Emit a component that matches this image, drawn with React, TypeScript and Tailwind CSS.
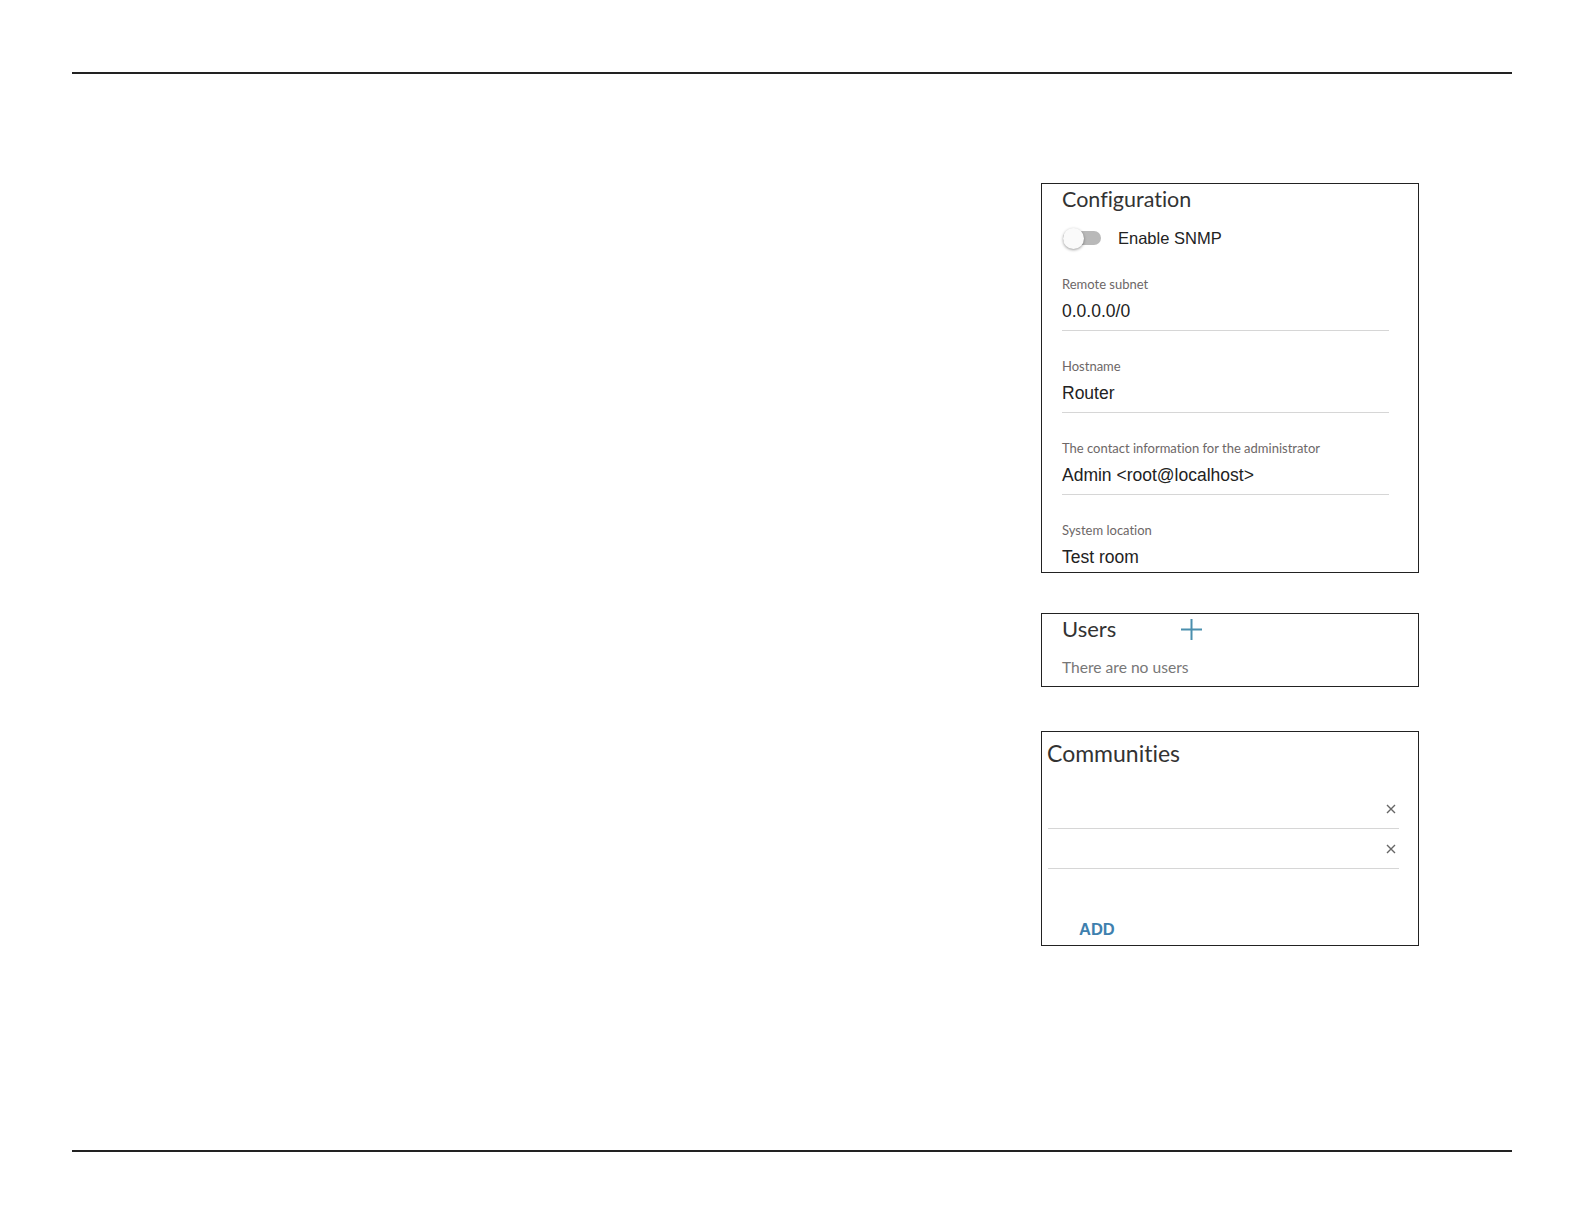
import React from 'react';

const valueFont = "font-['Liberation_Sans',Arial,sans-serif]";

const Field: React.FC<{ label: string; value: string; gap: string; underline?: boolean }> = ({
  label,
  value,
  gap,
  underline = true,
}) => (
  <div className={gap}>
    <div className="h-[16px] text-[13px] leading-[16px] text-[#6d6767]">{label}</div>
    <div className={`mt-[8px] h-[22px] text-[17.5px] leading-[22px] text-[#222] ${valueFont}`}>{value}</div>
    {underline && <div className="mt-[8px] h-px bg-[#d6d6d6]" />}
  </div>
);

const Toggle: React.FC = () => (
  <div className="relative w-[38px] h-[24px] flex items-center">
    <div className="w-[38px] h-[14px] rounded-full bg-[#b9b9b9]" />
    <div className="absolute left-0 top-[2px] w-[21px] h-[21px] rounded-full bg-[#fafafa] shadow-[0_1px_3px_rgba(0,0,0,0.4)]" />
  </div>
);

export default function App() {
  return (
    <div className="w-full h-[1224px] bg-white flex flex-col font-['Lato',sans-serif] [font-variant-ligatures:none]">
      <div className="mx-[72px] mt-[72px] h-[2px] bg-[#222]" />

      <div className="ml-[1041px] mt-[109px] w-[378px] flex flex-col">
        {/* Configuration */}
        <div className="h-[390px] overflow-hidden border border-[#222] pl-[20px] pr-[29px] pt-px">
          <div className="h-[28px] text-[21.5px] leading-[28px] text-[#333]">Configuration</div>
          <div className="mt-[13px] h-[24px] flex items-center gap-[17px] pl-px">
            <Toggle />
            <span className={`text-[16.5px] leading-[24px] text-[#222] ${valueFont}`}>Enable SNMP</span>
          </div>
          <Field gap="mt-[26px]" label="Remote subnet" value="0.0.0.0/0" />
          <Field gap="mt-[27px]" label="Hostname" value="Router" />
          <Field gap="mt-[27px]" label="The contact information for the administrator" value="Admin <root@localhost>" />
          <Field gap="mt-[27px]" label="System location" value="Test room" underline={false} />
        </div>

        {/* Users */}
        <div className="mt-[40px] h-[74px] border border-[#222] pl-[20px] pt-[3px]">
          <div className="h-[24px] flex items-center">
            <span className="w-[119px] text-[22px] leading-[24px] text-[#333]">Users</span>
            <svg width="21" height="21" viewBox="0 0 21 21" fill="none">
              <path d="M10.5 0v21M0 10.5h21" stroke="#4b8fae" strokeWidth="2" />
            </svg>
          </div>
          <div className="mt-[16px] h-[20px] text-[15.6px] leading-[20px] text-[#777]">There are no users</div>
        </div>

        {/* Communities */}
        <div className="mt-[44px] h-[215px] border border-[#222] pl-[5px] pr-[19px] pt-[7px] flex flex-col">
          <div className="h-[28px] text-[23px] leading-[28px] text-[#333]">Communities</div>
          <div className="mt-[22px] ml-px">
            {[0, 1].map((i) => (
              <div key={i} className="h-[40px] border-b border-[#d6d6d6] flex items-center justify-end pr-[3px]">
                <svg width="10" height="10" viewBox="0 0 10 10" fill="none" className="mt-px">
                  <path d="M1 1l8 8M9 1l-8 8" stroke="#666" strokeWidth="1.4" />
                </svg>
              </div>
            ))}
          </div>
          <div className={`mt-[50px] ml-[32px] h-[20px] text-[16.5px] leading-[20px] font-bold text-[#3e80ae] ${valueFont}`}>
            ADD
          </div>
        </div>
      </div>

      <div className="mt-auto mb-[72px] mx-[72px] h-[2px] bg-[#222]" />
    </div>
  );
}
